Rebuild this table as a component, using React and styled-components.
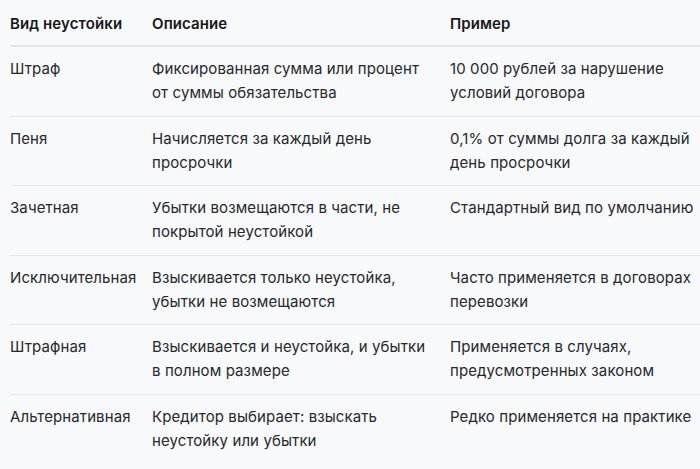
import React from "react";
import styled, { createGlobalStyle } from "styled-components";

const rows = [
  {
    kind: "Штраф",
    desc: "Фиксированная сумма или процент от суммы обязательства",
    example: "10 000 рублей за нарушение условий договора",
  },
  {
    kind: "Пеня",
    desc: "Начисляется за каждый день просрочки",
    example: "0,1% от суммы долга за каждый день просрочки",
  },
  {
    kind: "Зачетная",
    desc: "Убытки возмещаются в части, не покрытой неустойкой",
    example: "Стандартный вид по умолчанию",
  },
  {
    kind: "Исключительная",
    desc: "Взыскивается только неустойка, убытки не возмещаются",
    example: "Часто применяется в договорах перевозки",
  },
  {
    kind: "Штрафная",
    desc: "Взыскивается и неустойка, и убытки в полном размере",
    example: "Применяется в случаях, предусмотренных законом",
  },
  {
    kind: "Альтернативная",
    desc: "Кредитор выбирает: взыскать неустойку или убытки",
    example: "Редко применяется на практике",
  },
];

const GlobalStyle = createGlobalStyle`
  html, body {
    margin: 0;
    background: #f8f9fb;
  }
  body {
    font-family: Inter, "Noto Sans", sans-serif;
    color: #26282c;
  }
`;

const App = () => {
  return (
    <>
      <GlobalStyle />
      <Wrapper>
        <Table>
          <colgroup>
            <col style={{ width: 142 }} />
            <col style={{ width: 298 }} />
            <col />
          </colgroup>
          <thead>
            <tr>
              <Th>Вид неустойки</Th>
              <Th>Описание</Th>
              <Th>Пример</Th>
            </tr>
          </thead>
          <tbody>
            {rows.map((row) => (
              <Row key={row.kind}>
                <Td>{row.kind}</Td>
                <Td>{row.desc}</Td>
                <Td>{row.example}</Td>
              </Row>
            ))}
          </tbody>
        </Table>
      </Wrapper>
    </>
  );
};

const Wrapper = styled.div`
  padding-left: 10px;
`;
const Table = styled.table`
  width: 100%;
  border-collapse: collapse;
  table-layout: fixed;
  font-size: 15px;
  line-height: 24px;
  letter-spacing: 0.1px;
`;
const Th = styled.th`
  text-align: left;
  font-weight: 600;
  color: #17181b;
  padding: 12px 16px 9px 0;
  border-bottom: 2px solid #e2e4e8;
  &:last-child {
    padding-right: 0;
  }
`;
const Row = styled.tr`
  border-bottom: 1px solid #e6e8eb;
  &:last-child {
    border-bottom: none;
  }
`;
const Td = styled.td`
  vertical-align: top;
  padding: 10px 16px 10.6px 0;
  &:last-child {
    padding-right: 0;
  }
`;

export default App;
